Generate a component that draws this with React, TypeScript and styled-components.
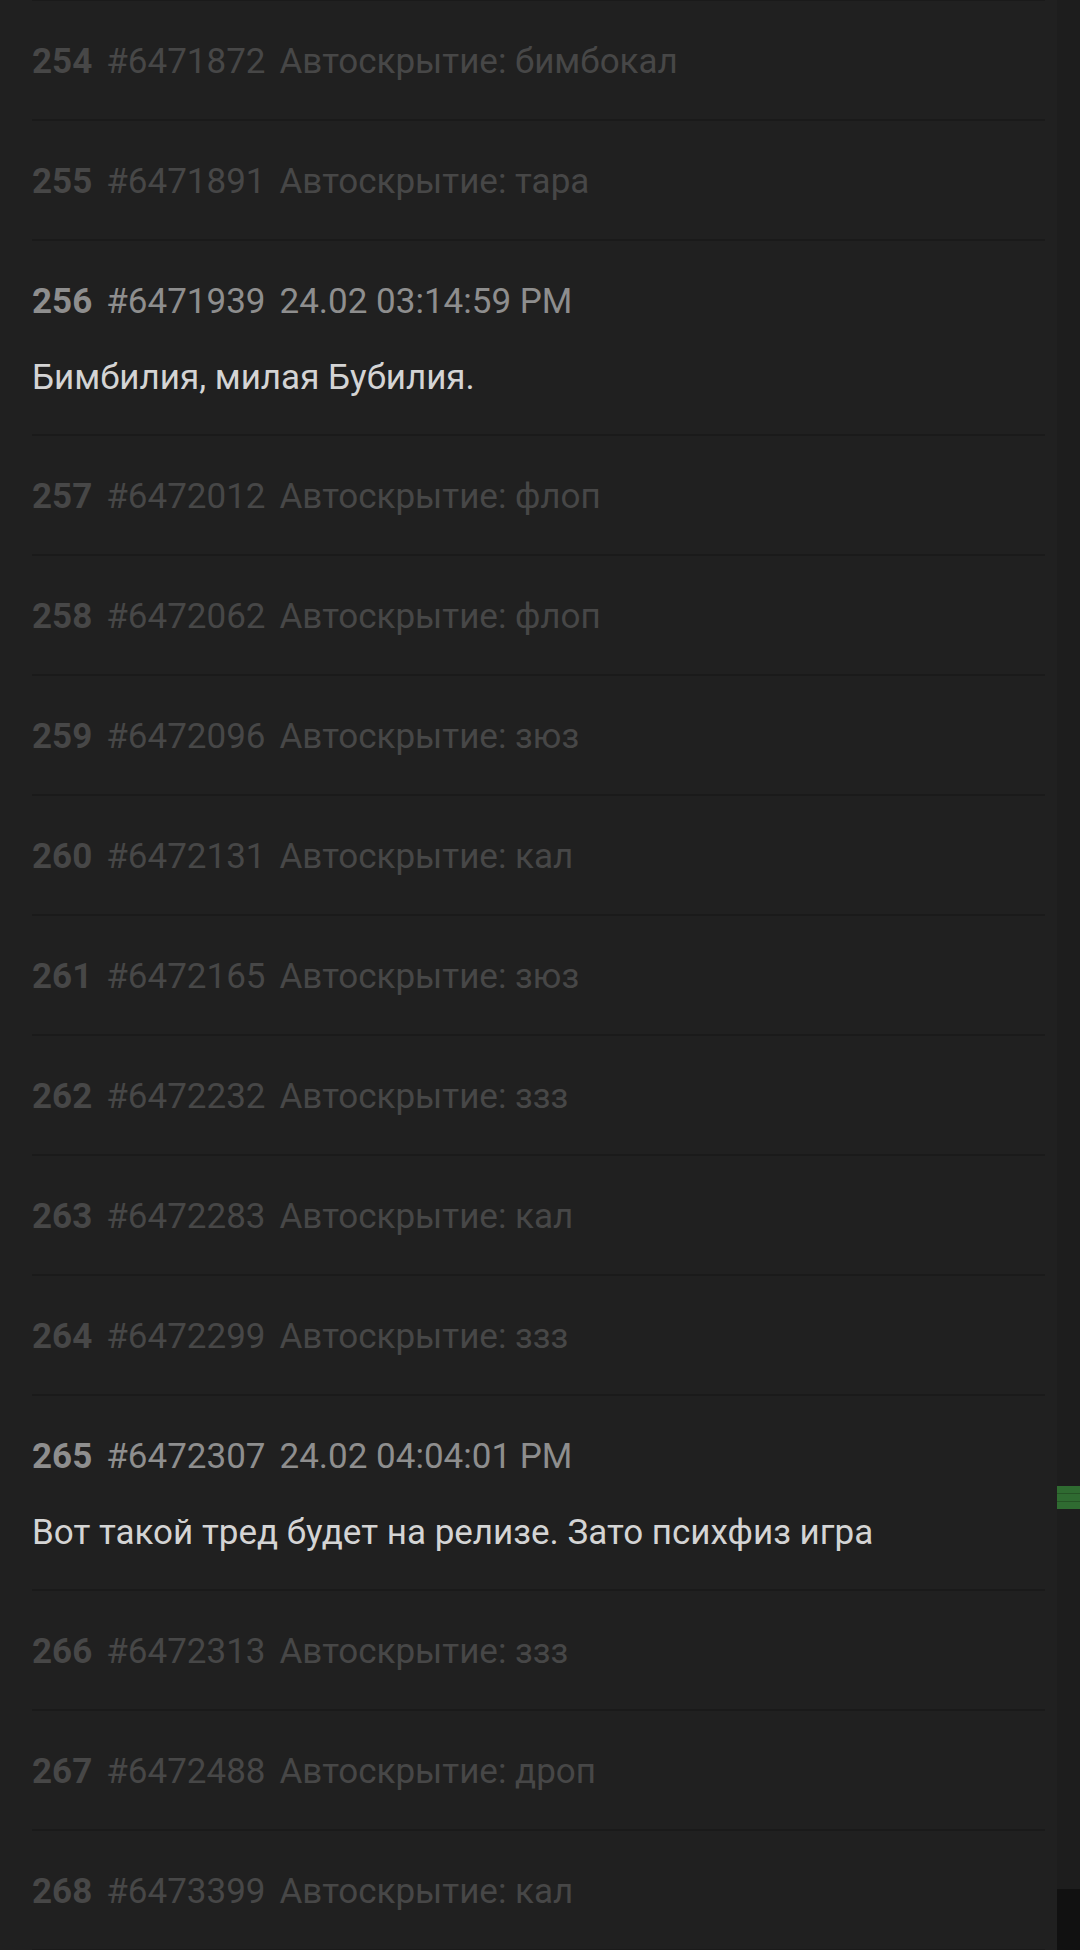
import styled, { createGlobalStyle } from 'styled-components';

const GlobalStyle = createGlobalStyle`
  html, body {
    margin: 0;
    padding: 0;
    background: #202020;
  }
  body {
    font-family: Roboto, "Noto Sans", sans-serif;
    overflow: hidden;
  }
`;

type Post = {
  num: number;
  id: string;
  hidden?: string;
  date?: string;
  text?: string;
};

const posts: Post[] = [
  { num: 254, id: '6471872', hidden: 'бимбокал' },
  { num: 255, id: '6471891', hidden: 'тара' },
  { num: 256, id: '6471939', date: '24.02 03:14:59 PM', text: 'Бимбилия, милая Бубилия.' },
  { num: 257, id: '6472012', hidden: 'флоп' },
  { num: 258, id: '6472062', hidden: 'флоп' },
  { num: 259, id: '6472096', hidden: 'зюз' },
  { num: 260, id: '6472131', hidden: 'кал' },
  { num: 261, id: '6472165', hidden: 'зюз' },
  { num: 262, id: '6472232', hidden: 'ззз' },
  { num: 263, id: '6472283', hidden: 'кал' },
  { num: 264, id: '6472299', hidden: 'ззз' },
  { num: 265, id: '6472307', date: '24.02 04:04:01 PM', text: 'Вот такой тред будет на релизе. Зато психфиз игра' },
  { num: 266, id: '6472313', hidden: 'ззз' },
  { num: 267, id: '6472488', hidden: 'дроп' },
  { num: 268, id: '6473399', hidden: 'кал' },
];

const Screen = styled.div`
  display: flex;
  height: 1950px;
  overflow: hidden;
`;

const Thread = styled.div`
  flex: 1;
  margin: -1px 12px 0 32px;
  border-top: 2px solid #1a1a1a;
`;

const Row = styled.div`
  padding: 43px 0 39px;
  border-bottom: 2px solid #1a1a1a;
`;

const Header = styled.div<{ $hidden?: boolean }>`
  display: flex;
  gap: 14px;
  font-size: 35px;
  line-height: 36px;
  white-space: nowrap;
  color: ${(p) => (p.$hidden ? '#474747' : '#8e8e8e')};
`;

const Num = styled.b`
  font-weight: 700;
`;

const Body = styled.div`
  margin: 40px 0 -1px;
  font-size: 35px;
  line-height: 36px;
  color: #d4d4d4;
`;

const Rail = styled.div`
  position: relative;
  width: 23px;
  flex-shrink: 0;
  background: #1d1d1d;
`;

const Marker = styled.div`
  position: absolute;
  left: 0;
  right: 0;
  top: 1486px;
  display: flex;
  flex-direction: column;
  gap: 1px;
  background: #255325;
`;

const MarkerBar = styled.div`
  height: 7px;
  background: #2f6b31;
`;

const Thumb = styled.div`
  position: absolute;
  left: 0;
  right: 0;
  top: 1889px;
  bottom: 0;
  background: #111111;
`;

const PostRow = ({ post }: { post: Post }) => {
  if (post.hidden) {
    return (
      <Row>
        <Header $hidden>
          <Num>{post.num}</Num>
          <span>#{post.id}</span>
          <span>Автоскрытие: {post.hidden}</span>
        </Header>
      </Row>
    );
  }

  return (
    <Row>
      <Header>
        <Num>{post.num}</Num>
        <span>#{post.id}</span>
        <span>{post.date}</span>
      </Header>
      <Body>{post.text}</Body>
    </Row>
  );
};

const App = () => {
  return (
    <>
      <GlobalStyle/>
      <Screen>
        <Thread>
          {posts.map((post) => (
            <PostRow key={post.num} post={post}/>
          ))}
        </Thread>
        <Rail>
          <Marker>
            <MarkerBar/>
            <MarkerBar/>
            <MarkerBar/>
          </Marker>
          <Thumb/>
        </Rail>
      </Screen>
    </>
  );
};

export default App;
